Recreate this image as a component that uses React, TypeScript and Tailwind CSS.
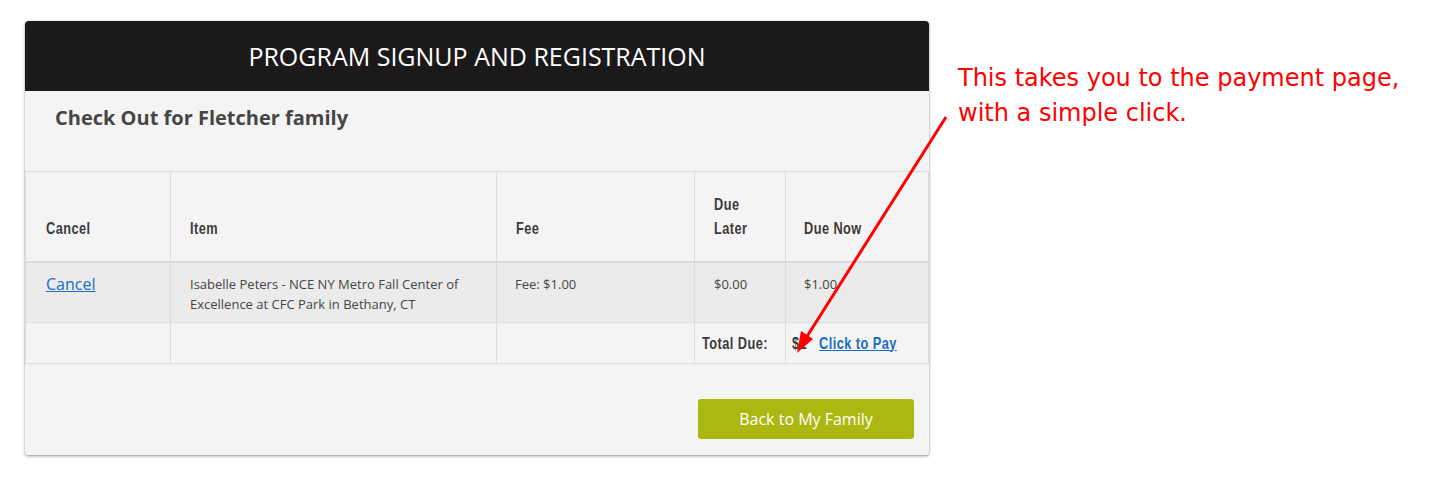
import React from "react";

function Cond({ children }: { children: React.ReactNode }) {
  return (
    <span className="inline-block origin-left scale-x-[0.75] whitespace-nowrap font-['Liberation_Sans',Arial,sans-serif] font-bold text-[17px] tracking-[0.6px] text-[#3b3b3b]">
      {children}
    </span>
  );
}

export default function App() {
  const th = "border border-[#dcdcdc] border-b-2 align-bottom text-left pr-[4px] pb-[20px] leading-[24px] font-normal";
  const td = "border border-[#dcdcdc] align-top pt-[11px] text-[13px] leading-[20px] text-[#454545]";
  return (
    <div className="relative w-[1429px] h-[489px] bg-white font-['Open_Sans',sans-serif] overflow-hidden">
      <div className="flex items-start">
        <div className="ml-[25px] mt-[21px] w-[904px] bg-[#f4f4f4] rounded-t-[4px] rounded-b-[3px] shadow-[0_1px_3px_rgba(0,0,0,0.45)] overflow-hidden">
          <div className="h-[70px] bg-[#1b191a] flex items-center justify-center">
            <span className="text-white text-[25px] leading-none">PROGRAM SIGNUP AND REGISTRATION</span>
          </div>
          <div className="h-[80px] pl-[30px] pt-[14px]">
            <h2 className="text-[20px] font-bold text-[#454545] leading-[26px]">Check Out for Fletcher family</h2>
          </div>
          <table className="w-full border-collapse table-fixed">
            <colgroup>
              <col className="w-[145px]" />
              <col className="w-[326px]" />
              <col className="w-[198px]" />
              <col className="w-[91px]" />
              <col />
            </colgroup>
            <thead>
              <tr className="h-[90px]">
                <th className={`${th} pl-[20px]`}><Cond>Cancel</Cond></th>
                <th className={`${th} pl-[19px]`}><Cond>Item</Cond></th>
                <th className={`${th} pl-[19px]`}><Cond>Fee</Cond></th>
                <th className={`${th} pl-[19px]`}>
                  <Cond>
                    Due
                    <br />
                    Later
                  </Cond>
                </th>
                <th className={`${th} pl-[18px]`}><Cond>Due Now</Cond></th>
              </tr>
            </thead>
            <tbody>
              <tr className="h-[61px] bg-[#ebebeb]">
                <td className="border border-[#dcdcdc] align-top pl-[20px] pt-[9px]">
                  <a href="#" className="text-[16px] leading-[22px] text-[#1a6cc4] underline">Cancel</a>
                </td>
                <td className={`${td} pl-[19px] pr-[20px]`}>
                  Isabelle Peters - NCE NY Metro Fall Center of Excellence at CFC Park in Bethany, CT
                </td>
                <td className={`${td} pl-[18px]`}>Fee: $1.00</td>
                <td className={`${td} pl-[19px]`}>$0.00</td>
                <td className={`${td} pl-[18px]`}>$1.00</td>
              </tr>
              <tr className="h-[41px]">
                <td className="border border-[#dcdcdc]"></td>
                <td className="border border-[#dcdcdc]"></td>
                <td className="border border-[#dcdcdc]"></td>
                <td className="border border-[#dcdcdc] pl-[7px] leading-[24px]"><Cond>Total Due:</Cond></td>
                <td className="border border-[#dcdcdc] pl-[6px] leading-[24px]">
                  <Cond>
                    $1
                    <a href="#" className="ml-[16px] text-[#1a6cc4] underline">Click to Pay</a>
                  </Cond>
                </td>
              </tr>
            </tbody>
          </table>
          <div className="flex justify-end pt-[35px] pr-[15px] pb-[16px]">
            <button className="w-[216px] h-[40px] rounded-[3px] bg-[#abb811] text-white text-[16px]">Back to My Family</button>
          </div>
        </div>
        <div className="ml-[29px] mt-[61px] font-['DejaVu_Sans',Verdana,sans-serif] text-[24px] leading-[35px] text-[#ff0000]">
          <p>This takes you to the payment page,</p>
          <p>with a simple click.</p>
        </div>
      </div>
      <svg className="absolute left-0 top-0 pointer-events-none" width="1429" height="489">
        <line x1="946" y1="117" x2="806" y2="338" stroke="#ff0000" strokeWidth="3" />
        <polygon points="797,353 801,331 813,339" fill="#ff0000" />
      </svg>
    </div>
  );
}
